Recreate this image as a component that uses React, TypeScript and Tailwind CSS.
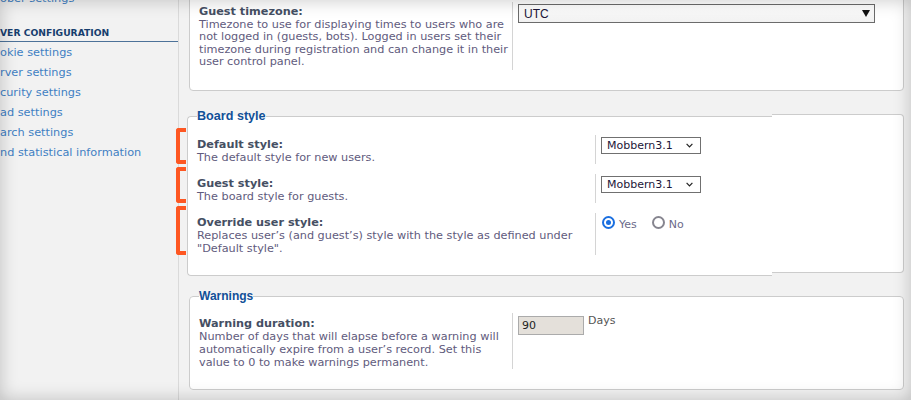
import React from "react";

// sidebar is scrolled horizontally, only the tail of each link shows
const menuItems = [
  "okie settings",
  "rver settings",
  "curity settings",
  "ad settings",
  "arch settings",
  "nd statistical information",
];

const label = "font-bold text-[#454f63]";
const explain = "text-[#5f5b7d]";

const Radio = ({ checked }: { checked: boolean }) => (
  <span
    className={`flex h-[13px] w-[13px] shrink-0 items-center justify-center rounded-full border-2 bg-white ${
      checked ? "border-[#1a6fe0]" : "border-[#86858f]"
    }`}
  >
    {checked && <span className="h-[5px] w-[5px] rounded-full bg-[#1a6fe0]" />}
  </span>
);

const StyleSelect = () => (
  <div className="mt-[2px] flex h-[17px] w-[100px] items-center justify-between border border-[#707070] bg-white pl-[5px] pr-[7px] text-[11px] leading-none text-[#1c1638]">
    <span>Mobbern3.1</span>
    <svg width="7" height="5" viewBox="0 0 7 5">
      <path d="M0.6 0.8 L3.5 3.8 L6.4 0.8" fill="none" stroke="#222" strokeWidth="1.2" />
    </svg>
  </div>
);

const Bracket = () => (
  <span className="absolute -left-[21px] -top-[7px] bottom-0 w-[10px] rounded-l-[3px] border-y-4 border-l-4 border-[#fe5722]" />
);

const App = () => {
  return (
    <div className="relative h-[400px] w-[911px] overflow-hidden bg-[#f2f2f2] font-['DejaVu_Sans',sans-serif] text-[11.25px]">
      <div className="flex h-full">
        <aside className="h-full w-[179px] shrink-0 border-r border-[#dadada]">
          <div className="-mt-[11px] h-[20px] text-[11.3px] leading-[20px] text-[#3f7fc3]">ober settings</div>
          <div className="border-b border-[#4d7299] pt-[17px] pb-[2px] text-[9.2px] font-bold leading-[13px] text-[#173e6e]">
            VER CONFIGURATION
          </div>
          <ul className="mt-[1px]">
            {menuItems.map((item) => (
              <li key={item} className="h-[20px] whitespace-nowrap text-[11.3px] leading-[20px] text-[#3f7fc3]">
                {item}
              </li>
            ))}
          </ul>
        </aside>

        <main className="ml-[10px] w-[715px] shrink-0">
          {/* guest timezone panel, its top is scrolled away */}
          <div className="-mt-[20px] rounded-[4px] border border-[#cccccc] bg-white pt-[21px] pb-[20px] pl-[9px]">
            <dl className="flex">
              <dt className="w-[313px] shrink-0 whitespace-nowrap pt-[4px] leading-[12.5px]">
                <span className={label}>Guest timezone:</span>
                <br />
                <span className={explain}>
                  Timezone to use for displaying times to users who are
                  <br />
                  not logged in (guests, bots). Logged in users set their
                  <br />
                  timezone during registration and can change it in their
                  <br />
                  user control panel.
                </span>
              </dt>
              <dd className="h-[68px] border-l border-[#d4d4d4] pl-[5px]">
                <div className="mt-[2px] flex h-[19px] w-[357px] items-center justify-between border border-[#6b6b6b] bg-gradient-to-b from-white to-[#f1f1f1] pl-[5px] pr-[4px] font-['Liberation_Sans',Arial,sans-serif] text-[12px] text-[#1c1638]">
                  <span>UTC</span>
                  <svg width="8" height="7" viewBox="0 0 8 7">
                    <polygon points="0,0 8,0 4,7" fill="#111" />
                  </svg>
                </div>
              </dd>
            </dl>
          </div>

          {/* board style */}
          <div className="mt-[18px] flex items-start">
            <fieldset className="-ml-[2px] w-[585px] shrink-0 rounded-l-[4px] border border-r-0 border-[#cccccc] bg-white pt-[12px] pb-[20px] pl-[9px]">
              <legend className="font-['Liberation_Sans',Arial,sans-serif] text-[12.6px] font-bold leading-[14px] text-[#115098]">
                Board style
              </legend>
              <div className="flex flex-col gap-[10px]">
                <dl className="relative flex">
                  <Bracket />
                  <dt className="w-[398px] shrink-0 pt-[3px] leading-[13px]">
                    <span className={label}>Default style:</span>
                    <br />
                    <span className={explain}>The default style for new users.</span>
                  </dt>
                  <dd className="border-l border-[#d4d4d4] pl-[5px]">
                    <StyleSelect />
                  </dd>
                </dl>
                <dl className="relative flex">
                  <Bracket />
                  <dt className="w-[398px] shrink-0 pt-[3px] leading-[13px]">
                    <span className={label}>Guest style:</span>
                    <br />
                    <span className={explain}>The board style for guests.</span>
                  </dt>
                  <dd className="border-l border-[#d4d4d4] pl-[5px]">
                    <StyleSelect />
                  </dd>
                </dl>
                <dl className="relative flex">
                  <Bracket />
                  <dt className="w-[398px] shrink-0 whitespace-nowrap pt-[3px] leading-[13px]">
                    <span className={label}>Override user style:</span>
                    <br />
                    <span className={explain}>
                      Replaces user’s (and guest’s) style with the style as defined under
                      <br />
                      "Default style".
                    </span>
                  </dt>
                  <dd className="flex items-start border-l border-[#d4d4d4] pl-[6px] pt-[3px] text-[11px] text-[#6b6a8a]">
                    <Radio checked />
                    <span className="ml-[4px] mt-[2px] leading-[13px]">Yes</span>
                    <span className="ml-[15px]">
                      <Radio checked={false} />
                    </span>
                    <span className="ml-[4px] mt-[2px] leading-[13px]">No</span>
                  </dd>
                </dl>
              </div>
            </fieldset>
            <div className="mt-[5px] h-[159px] flex-1 rounded-r-[4px] border border-l-0 border-[#cccccc] bg-white" />
          </div>

          {/* warnings */}
          <fieldset className="mt-[13px] rounded-[4px] border border-[#cccccc] bg-white pt-[10px] pb-[20px] pl-[9px]">
            <legend className="font-['Liberation_Sans',Arial,sans-serif] text-[12px] font-bold leading-[14px] text-[#115098]">
              Warnings
            </legend>
            <dl className="flex">
              <dt className="w-[313px] shrink-0 whitespace-nowrap pt-[4px] leading-[13px]">
                <span className={label}>Warning duration:</span>
                <br />
                <span className={explain}>
                  Number of days that will elapse before a warning will
                  <br />
                  automatically expire from a user’s record. Set this
                  <br />
                  value to 0 to make warnings permanent.
                </span>
              </dt>
              <dd className="flex h-[56px] items-start border-l border-[#d4d4d4] pl-[5px]">
                <div className="mt-[3px] h-[19px] w-[66px] border border-[#ababab] bg-[#e4e0da] pl-[3px] text-[11px] leading-[17px] text-[#222]">
                  90
                </div>
                <span className="ml-[4px] mt-[1px] text-[11px] leading-[13px] text-[#555]">Days</span>
              </dd>
            </dl>
          </fieldset>
        </main>
      </div>

      {/* darkened edges of the screenshot */}
      <div className="pointer-events-none absolute inset-0 shadow-[inset_0_0_18px_rgba(0,0,0,0.22)]" />
    </div>
  );
};

export default App;
